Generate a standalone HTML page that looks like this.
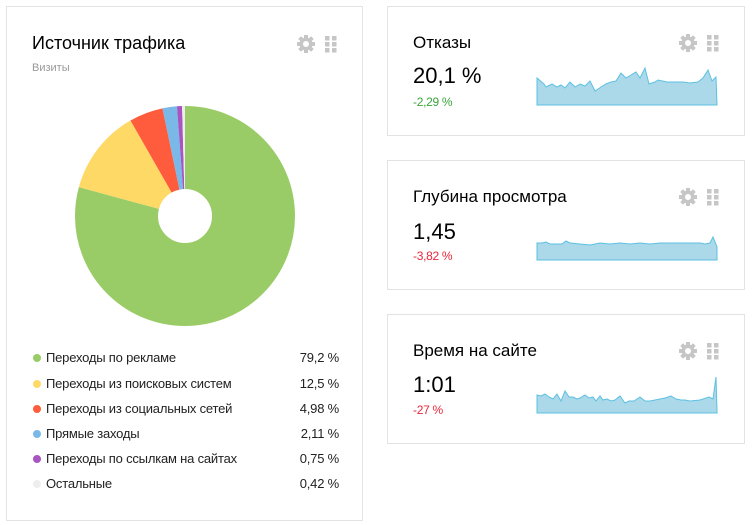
<!DOCTYPE html>
<html><head><meta charset="utf-8"><style>
*{margin:0;padding:0;box-sizing:border-box}
body{width:755px;height:525px;background:#fff;font-family:"Liberation Sans",sans-serif;position:relative;overflow:hidden;color:#000}
.card{position:absolute;border:1px solid #e3e3e3;background:#fff}
.t{position:absolute;font-size:17px;color:#000}
.leg{position:absolute;left:46px;font-size:13px;color:#222;width:293px;letter-spacing:-0.2px}
.leg span{position:absolute;right:0}
.leg i{position:absolute;left:-13px;top:4px;width:8px;height:8px;border-radius:50%}
.val{position:absolute;left:413px;font-size:22px}
.d{position:absolute;left:413px;font-size:12px;letter-spacing:-0.3px}
</style></head><body>
<div class="card" style="left:6px;top:6px;width:357px;height:515px"></div>
<div class="card" style="left:387px;top:6px;width:358px;height:130px"></div>
<div class="card" style="left:387px;top:160px;width:358px;height:130px"></div>
<div class="card" style="left:387px;top:314px;width:358px;height:130px"></div>

<div class="t" style="left:32px;top:33px;font-size:18px">Источник трафика</div>
<div style="position:absolute;left:32px;top:62px;font-size:11px;color:#999">Визиты</div>

<svg width="755" height="525" style="position:absolute;left:0;top:0">
<defs>
<g id="gear"><g fill="#c6c6c6"><circle r="6.5"/><rect x="-2" y="-9" width="4" height="18"/><rect x="-2" y="-9" width="4" height="18" transform="rotate(45)"/><rect x="-2" y="-9" width="4" height="18" transform="rotate(90)"/><rect x="-2" y="-9" width="4" height="18" transform="rotate(135)"/></g><circle r="3" fill="#fff"/></g>
<g id="grip" fill="#c6c6c6"><rect x="0" y="0" width="4.5" height="4.5"/><rect x="7" y="0" width="4.5" height="4.5"/><rect x="0" y="6" width="4.5" height="4.5"/><rect x="7" y="6" width="4.5" height="4.5"/><rect x="0" y="12" width="4.5" height="4.5"/><rect x="7" y="12" width="4.5" height="4.5"/></g>
</defs>
<use href="#gear" x="306" y="44"/><use href="#grip" x="325" y="36"/>
<use href="#gear" x="688" y="43"/><use href="#grip" x="707" y="35"/>
<use href="#gear" x="688" y="197"/><use href="#grip" x="707" y="189"/>
<use href="#gear" x="688" y="351"/><use href="#grip" x="707" y="343"/>

<g transform="translate(185,216) rotate(-90)" fill="none" stroke-width="83">
<circle r="68.5" stroke="#99cc66" stroke-dasharray="340.9 500" stroke-dashoffset="0"/>
<circle r="68.5" stroke="#ffd966" stroke-dasharray="53.8 500" stroke-dashoffset="-340.9"/>
<circle r="68.5" stroke="#ff5c3d" stroke-dasharray="21.4 500" stroke-dashoffset="-394.7"/>
<circle r="68.5" stroke="#7ab8e8" stroke-dasharray="9.1 500" stroke-dashoffset="-416.1"/>
<circle r="68.5" stroke="#a855c0" stroke-dasharray="3.2 500" stroke-dashoffset="-425.2"/>
<circle r="68.5" stroke="#eeeeee" stroke-dasharray="1.8 500" stroke-dashoffset="-428.4"/>
</g>

<g fill="#acd9ea" stroke="#5bc0e0" stroke-width="1">
<polygon points="537,105 537,78 544,84 546,87 552,84 557,87 561,85 565,88 570,82 575,87 580,84 585,86 590,81 595,91 601,87 606,84 611,82 616,81 621,73 626,78 631,75 636,72 640,78 645,68 649,84 655,82 658,80 667,82 683,82 690,83 698,82 703,78 708,70 712,81 716,77 717,105"/>
<polygon points="537,260 537,243 542,243 546,242 550,244 556,244 562,244 566,241 570,243 580,244 590,245 600,243 610,244 620,243 630,244 640,243 650,244 660,243 670,243 680,243 690,243 700,243 705,244 710,243 713,237 717,247 717,260"/>
<polygon points="537,413 537,395 541,396 545,394 549,397 553,399 557,394 561,401 565,391 569,397 573,397 577,399 580,398 585,395 589,398 593,397 596,401 600,396 603,400 607,399 611,401 615,400 620,396 625,403 629,401 634,401 640,397 645,401 650,401 655,400 665,398 671,396 676,399 681,400 685,400 690,401 700,400 709,397 713,399 716,377 717,411 717,413"/>
</g>
</svg>

<div class="leg" style="top:350px"><i style="background:#99cc66"></i>Переходы по рекламе<span>79,2 %</span></div>
<div class="leg" style="top:376px"><i style="background:#ffd966"></i>Переходы из поисковых систем<span>12,5 %</span></div>
<div class="leg" style="top:401px"><i style="background:#ff5c3d"></i>Переходы из социальных сетей<span>4,98 %</span></div>
<div class="leg" style="top:426px"><i style="background:#7ab8e8"></i>Прямые заходы<span>2,11 %</span></div>
<div class="leg" style="top:451px"><i style="background:#a855c0"></i>Переходы по ссылкам на сайтах<span>0,75 %</span></div>
<div class="leg" style="top:476px"><i style="background:#eeeeee"></i>Остальные<span>0,42 %</span></div>

<div class="t" style="left:413px;top:33px">Отказы</div>
<div class="val" style="top:63px">20,1 %</div>
<div class="d" style="top:95px;color:#3aa53a">-2,29 %</div>

<div class="t" style="left:413px;top:187px">Глубина просмотра</div>
<div class="val" style="top:219px">1,45</div>
<div class="d" style="top:249px;color:#e8263a">-3,82 %</div>

<div class="t" style="left:413px;top:341px">Время на сайте</div>
<div class="val" style="top:372px">1:01</div>
<div class="d" style="top:403px;color:#e8263a">-27 %</div>
</body></html>
